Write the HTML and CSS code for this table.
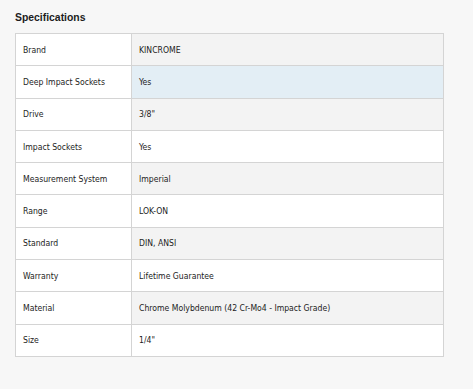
FILE: index.html
```html
<!DOCTYPE html>
<html>
<head>
<meta charset="utf-8">
<link rel="stylesheet" href="styles.css">
</head>
<body>
<section class="specs">
  <h2 class="specs-title">Specifications</h2>
  <table class="specs-table">
    <tbody>
      <tr><td class="label">Brand</td><td class="value">KINCROME</td></tr>
      <tr class="hover"><td class="label">Deep Impact Sockets</td><td class="value">Yes</td></tr>
      <tr><td class="label">Drive</td><td class="value">3/8"</td></tr>
      <tr><td class="label">Impact Sockets</td><td class="value">Yes</td></tr>
      <tr><td class="label">Measurement System</td><td class="value">Imperial</td></tr>
      <tr><td class="label">Range</td><td class="value">LOK-ON</td></tr>
      <tr><td class="label">Standard</td><td class="value">DIN, ANSI</td></tr>
      <tr><td class="label">Warranty</td><td class="value">Lifetime Guarantee</td></tr>
      <tr><td class="label">Material</td><td class="value">Chrome Molybdenum (42 Cr-Mo4 - Impact Grade)</td></tr>
      <tr><td class="label">Size</td><td class="value">1/4"</td></tr>
    </tbody>
  </table>
</section>
</body>
</html>
```
FILE: styles.css
```css
html, body {
  margin: 0;
  padding: 0;
  background: #f7f7f7;
}
body {
  font-family: "DejaVu Sans Condensed", "Liberation Sans", sans-serif;
  color: #1c1c1c;
}
.specs {
  padding: 11px 0 0 15px;
}
.specs-title {
  margin: 0 0 8px 0;
  font-family: "Liberation Sans", Arial, sans-serif;
  font-size: 10.4px;
  font-weight: 700;
  line-height: 14px;
  color: #1c1c1c;
}
.specs-table {
  width: 429px;
  table-layout: fixed;
  border-collapse: collapse;
  font-size: 8.6px;
}
.specs-table tr {
  height: 32.3px;
}
.specs-table td {
  border: 1px solid #d4d4d4;
  padding: 0 7px;
  vertical-align: middle;
  line-height: 12px;
  white-space: nowrap;
}
.specs-table .label {
  width: 101px;
  background: #fff;
}
.specs-table tr:nth-child(odd) .value {
  background: #f3f3f3;
}
.specs-table tr:nth-child(even) .value {
  background: #fff;
}
.specs-table tr.hover .value {
  background: #e3eef5;
}
```
